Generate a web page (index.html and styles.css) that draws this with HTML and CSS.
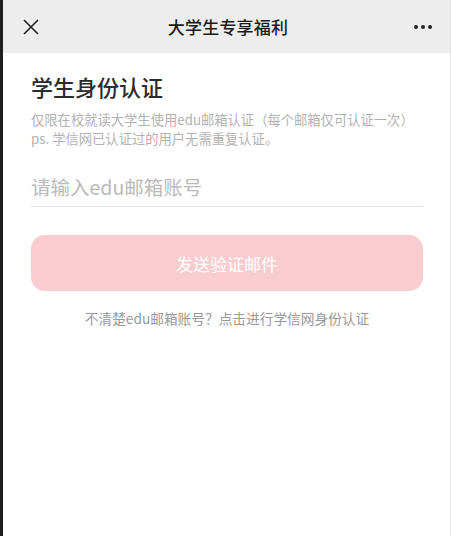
FILE: index.html
```html
<!DOCTYPE html>
<html lang="zh-CN">
    <head>
        <meta charset="utf-8">
        <title>大学生专享福利</title>
        <link rel="stylesheet" href="styles.css">
    </head>
    <body>
        <div class="page">
            <div class="topbar">
                <span class="topbar-close">
                    <svg width="16" height="16" viewBox="0 0 16 16">
                        <path d="M1 1 L15 15 M15 1 L1 15" stroke="#222" stroke-width="1.6" fill="none"/>
                    </svg>
                </span>
                <span class="topbar-title">大学生专享福利</span>
                <span class="topbar-more">
                    <svg width="20" height="6" viewBox="0 0 20 6">
                        <circle cx="3" cy="3" r="2" fill="#222"/>
                        <circle cx="10" cy="3" r="2" fill="#222"/>
                        <circle cx="17" cy="3" r="2" fill="#222"/>
                    </svg>
                </span>
            </div>
            <div class="content">
                <h1 class="title">学生身份认证</h1>
                <p class="desc">仅限在校就读大学生使用edu邮箱认证（每个邮箱仅可认证一次）<br>ps. 学信网已认证过的用户无需重复认证。</p>
                <div class="field">
                    <input class="field-input" type="text" placeholder="请输入edu邮箱账号">
                </div>
                <button class="send-btn" type="button">发送验证邮件</button>
                <p class="hint">不清楚edu邮箱账号？点击进行学信网身份认证</p>
            </div>
        </div>
    </body>
</html>
```

FILE: styles.css
```css
*
{
    box-sizing: border-box;
}
body
{
    margin: 0;
    padding: 0;
    background: #fff;
    font-family: "Noto Sans CJK SC", "Noto Sans", sans-serif;
}
.page
{
    min-height: 536px;
    border-left: 3px solid #1f1f1f;
    border-right: 1px solid #e2e2e2;
    display: flex;
    flex-direction: column;
}
.topbar
{
    height: 53px;
    background: #ededed;
    display: flex;
    align-items: center;
    justify-content: space-between;
    padding: 0 17px 0 20px;
}
.topbar-close
{
    width: 30px;
    display: flex;
    align-items: center;
}
.topbar-more
{
    width: 30px;
    display: flex;
    justify-content: flex-end;
}
.topbar-title
{
    font-size: 17px;
    font-weight: 500;
    color: #1a1a1a;
    letter-spacing: 0.2px;
}
.content
{
    padding: 0 27px 0 28px;
}
.title
{
    margin: 18px 0 0;
    font-size: 22px;
    line-height: 30px;
    font-weight: 500;
    color: #2b2b2b;
}
.desc
{
    margin: 9px 0 0;
    font-size: 13.3px;
    line-height: 19px;
    color: #b2b2b2;
}
.field
{
    margin-top: 18px;
}
.field-input
{
    width: 100%;
    height: 41px;
    border: none;
    border-bottom: 1px solid #e3e3e3;
    padding: 0;
    font-family: inherit;
    font-size: 19.5px;
    color: #333;
    outline: none;
    background: transparent;
}
.field-input::placeholder
{
    color: #bababa;
}
.send-btn
{
    display: block;
    width: 100%;
    height: 56px;
    margin-top: 28px;
    border: none;
    border-radius: 14px;
    background: #f9cdcf;
    color: #fff;
    font-family: inherit;
    font-size: 17px;
}
.hint
{
    margin: 17px 0 0;
    text-align: center;
    font-size: 13.7px;
    line-height: 20px;
    color: #999;
}
```
